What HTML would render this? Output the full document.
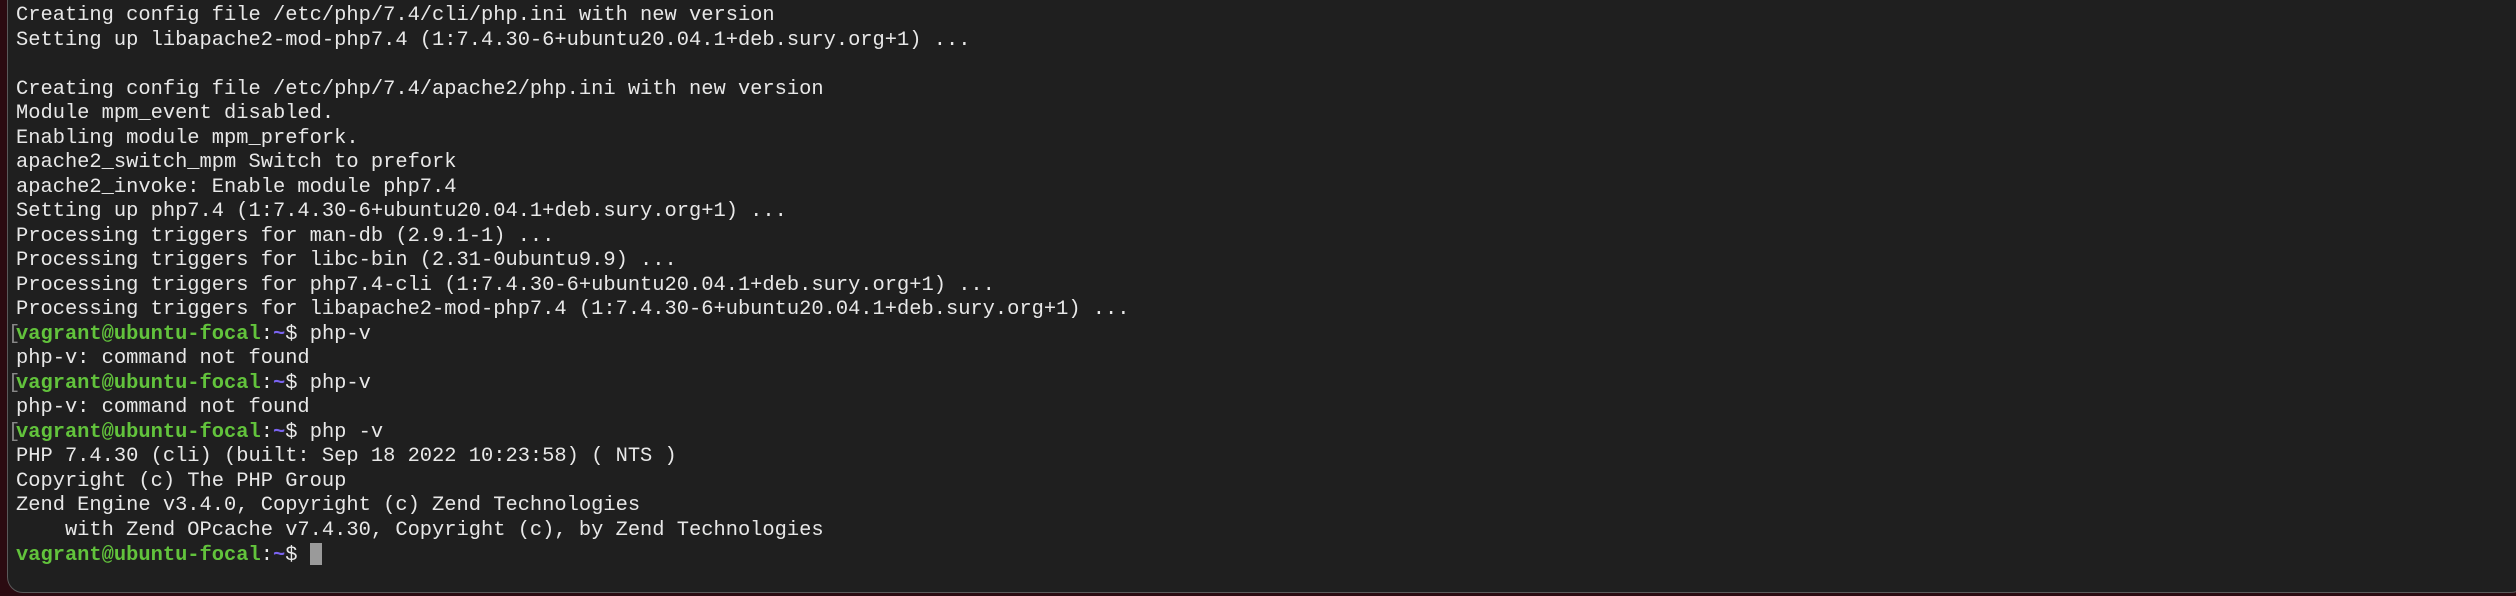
<!DOCTYPE html>
<html><head><meta charset="utf-8"><style>
html,body{margin:0;padding:0;width:2516px;height:596px;overflow:hidden;background:#2b0b11;}
.win{position:absolute;left:7px;top:-20px;width:2520px;height:613px;background:#1f1f1f;border:1.5px solid #5a5a5a;border-radius:16px;box-sizing:border-box;}
pre{position:absolute;left:16px;top:4px;margin:0;font-family:"Liberation Mono",monospace;font-size:20.4px;line-height:24.5px;color:#e8e8e8;}
.g{color:#62c33c;font-weight:bold}
.t{color:#7a63f0;font-weight:bold}
.b{position:absolute;left:8px;color:#888;font-family:"Liberation Mono",monospace;font-size:20.4px;line-height:24.5px}
.cur{display:inline-block;width:12px;height:22px;background:#9a9a9a;vertical-align:-5px}
</style></head><body>
<div class="win"></div>
<pre>Creating config file /etc/php/7.4/cli/php.ini with new version
Setting up libapache2-mod-php7.4 (1:7.4.30-6+ubuntu20.04.1+deb.sury.org+1) ...

Creating config file /etc/php/7.4/apache2/php.ini with new version
Module mpm_event disabled.
Enabling module mpm_prefork.
apache2_switch_mpm Switch to prefork
apache2_invoke: Enable module php7.4
Setting up php7.4 (1:7.4.30-6+ubuntu20.04.1+deb.sury.org+1) ...
Processing triggers for man-db (2.9.1-1) ...
Processing triggers for libc-bin (2.31-0ubuntu9.9) ...
Processing triggers for php7.4-cli (1:7.4.30-6+ubuntu20.04.1+deb.sury.org+1) ...
Processing triggers for libapache2-mod-php7.4 (1:7.4.30-6+ubuntu20.04.1+deb.sury.org+1) ...
<span class="g">vagrant@ubuntu-focal</span>:<span class="t">~</span>$ php-v
php-v: command not found
<span class="g">vagrant@ubuntu-focal</span>:<span class="t">~</span>$ php-v
php-v: command not found
<span class="g">vagrant@ubuntu-focal</span>:<span class="t">~</span>$ php -v
PHP 7.4.30 (cli) (built: Sep 18 2022 10:23:58) ( NTS )
Copyright (c) The PHP Group
Zend Engine v3.4.0, Copyright (c) Zend Technologies
    with Zend OPcache v7.4.30, Copyright (c), by Zend Technologies
<span class="g">vagrant@ubuntu-focal</span>:<span class="t">~</span>$ <span class="cur"></span></pre>
<div class="b" style="top:322.5px">[</div>
<div class="b" style="top:371.5px">[</div>
<div class="b" style="top:420.5px">[</div>
</body></html>
